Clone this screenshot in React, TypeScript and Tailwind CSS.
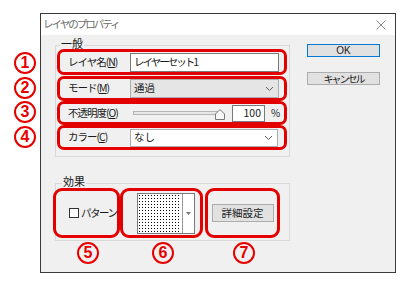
import React from 'react'

const jp = "font-['Noto_Sans_CJK_JP','Liberation_Sans',sans-serif]"

function Chevron() {
  return (
    <svg width="9" height="6" viewBox="0 0 9 6" className="shrink-0">
      <polyline points="1,1 4.5,4.5 8,1" fill="none" stroke="#606060" strokeWidth="1" />
    </svg>
  )
}

function Row({ h, mt = '', children }: { h: string; mt?: string; children: React.ReactNode }) {
  return (
    <div className={`flex items-center border-[3px] border-[#e30000] rounded-[7px] ${h} ${mt}`}>
      {children}
    </div>
  )
}

function Label({ text, k }: { text: string; k: string }) {
  return (
    <div className="w-[62px] pl-[8px] box-content text-[10.5px] leading-none tracking-[-1px] text-[#1a1a1a] whitespace-nowrap">
      {text}(<span className="underline">{k}</span>)
    </div>
  )
}

// red circled annotation numbers that sit on top of the dialog
const marks = [
  { n: '1', x: 'left-[14px]', y: 'top-[52px]' },
  { n: '2', x: 'left-[14px]', y: 'top-[77px]' },
  { n: '3', x: 'left-[14px]', y: 'top-[101px]' },
  { n: '4', x: 'left-[14px]', y: 'top-[126px]' },
  { n: '5', x: 'left-[77px]', y: 'top-[242px]' },
  { n: '6', x: 'left-[152px]', y: 'top-[242px]' },
  { n: '7', x: 'left-[233px]', y: 'top-[242px]' },
]

export default function App() {
  return (
    <div className={`relative w-[414px] h-[287px] bg-white overflow-hidden ${jp}`}>
      <div className="ml-[40px] mt-[13px] w-[356px] h-[260px] border border-[#3a3a3a] bg-[#f0f0f0] flex flex-col">
        {/* title bar */}
        <div className="h-[21px] bg-white flex items-center justify-between pl-[2px] pr-[9px]">
          <span className="text-[10.5px] leading-none tracking-[-2px] text-[#6b6b6b]">レイヤのプロパティ</span>
          <svg width="10" height="10" viewBox="0 0 10 10">
            <line x1="0.5" y1="0.5" x2="9.5" y2="9.5" stroke="#8a8a8a" strokeWidth="1" />
            <line x1="9.5" y1="0.5" x2="0.5" y2="9.5" stroke="#8a8a8a" strokeWidth="1" />
          </svg>
        </div>

        <div className="flex">
          <div className="pl-[14px]">
            {/* 一般 */}
            <div className="relative mt-[10px] w-[235px] border border-[#d9d9d9] pt-[3px] pb-[6px] pl-[1px] pr-[2px]">
              <span className="absolute -top-[8px] left-[4px] px-[1px] bg-[#f0f0f0] text-[11px] leading-none text-[#1a1a1a]">一般</span>
              <Row h="h-[26px]">
                <Label text="レイヤ名" k="N" />
                <div className="w-[149px] h-[19px] bg-white border border-[#7a7a7a] flex items-center pl-[3px] text-[10.5px] leading-none tracking-[-2px] text-[#1a1a1a]">
                  レイヤーセット1
                </div>
              </Row>
              <Row h="h-[25px]" mt="mt-[1px]">
                <Label text="モード" k="M" />
                <div className="w-[149px] h-[19px] bg-[#e5e5e5] border border-[#adadad] flex items-center justify-between pl-[3px] pr-[4px] text-[10.5px] leading-none text-[#1a1a1a]">
                  <span>通過</span>
                  <Chevron />
                </div>
              </Row>
              <Row h="h-[24px]">
                <Label text="不透明度" k="O" />
                <div className="w-[96px] h-[16px] relative flex items-center">
                  <div className="ml-[3px] w-[89px] h-[4px] bg-[#e7e7e7] border border-[#b5b5b5]" />
                  <svg width="10" height="11" viewBox="0 0 10 11" className="absolute left-[85px] top-[4px]">
                    <polygon points="0.5,10.5 0.5,5 5,0.5 9.5,5 9.5,10.5" fill="#f7f7f7" stroke="#7a7a7a" strokeWidth="1" />
                  </svg>
                </div>
                <div className="ml-[6px] w-[33px] h-[17px] bg-white border border-[#7a7a7a] flex items-center justify-end pr-[3px] text-[10.5px] leading-none text-[#1a1a1a]">
                  100
                </div>
                <span className="ml-[6px] text-[10px] leading-none text-[#1a1a1a]">%</span>
              </Row>
              <Row h="h-[25px]">
                <Label text="カラー" k="C" />
                <div className="w-[148px] h-[18px] bg-white border border-[#adadad] flex items-center justify-between pl-[3px] pr-[4px] text-[10.5px] leading-none text-[#1a1a1a]">
                  <span>なし</span>
                  <Chevron />
                </div>
              </Row>
            </div>

            {/* 効果 */}
            <div className="relative mt-[26px] w-[235px] h-[58px] border border-[#d9d9d9] pt-[4px]">
              <span className="absolute -top-[8px] left-[6px] px-[1px] bg-[#f0f0f0] text-[11px] leading-none text-[#1a1a1a]">効果</span>
              <div className="flex -ml-[3px] h-[50px]">
                <div className="w-[67px] h-full border-[3px] border-[#e30000] rounded-[9px] flex items-center pl-[13px] gap-[2px]">
                  <div className="w-[10px] h-[10px] bg-white border border-[#333] shrink-0" />
                  <span className="text-[10.5px] leading-none tracking-[-1.5px] text-[#1a1a1a] whitespace-nowrap">パターン</span>
                </div>
                <div className="w-[83px] h-full border-[3px] border-[#e30000] rounded-[9px] flex items-center pl-[14px]">
                  <div className="w-[58px] h-[41px] bg-white border border-[#7a7a7a] flex">
                    <svg width="44" height="39" className="shrink-0">
                      <defs>
                        <pattern id="dots" width="3" height="3" patternUnits="userSpaceOnUse">
                          <rect x="1" y="1" width="1" height="1" fill="#000" />
                        </pattern>
                      </defs>
                      <rect x="1" y="1" width="42" height="37" fill="url(#dots)" />
                    </svg>
                    <div className="flex-1 border-l border-[#9a9a9a] flex items-center justify-center">
                      <svg width="5" height="3" viewBox="0 0 5 3">
                        <polygon points="0,0 5,0 2.5,3" fill="#777" />
                      </svg>
                    </div>
                  </div>
                </div>
                <div className="ml-[2px] w-[75px] h-full border-[3px] border-[#e30000] rounded-[9px] flex items-center justify-center">
                  <div className="w-[62px] h-[18px] bg-[#e1e1e1] border border-[#adadad] flex items-center justify-center text-[10.5px] leading-none text-[#1a1a1a]">
                    詳細設定
                  </div>
                </div>
              </div>
            </div>
          </div>

          {/* buttons */}
          <div className="ml-[17px] flex flex-col">
            <div className="mt-[9px] w-[73px] h-[13px] bg-[#e1e1e1] border border-[#0078d7] flex items-center justify-center text-[10px] leading-none text-[#1a1a1a] font-['Liberation_Sans',sans-serif]">
              OK
            </div>
            <div className="mt-[15px] w-[73px] h-[13px] bg-[#e1e1e1] border border-[#adadad] flex items-center justify-center text-[10px] leading-none tracking-[-2px] text-[#1a1a1a]">
              キャンセル
            </div>
          </div>
        </div>
      </div>

      {marks.map((m) => (
        <div
          key={m.n}
          className={`absolute ${m.x} ${m.y} w-[22px] h-[22px] rounded-full border-[2.5px] border-[#e60000] flex items-center justify-center text-[16px] leading-none font-bold text-[#e60000] font-['Liberation_Sans',sans-serif]`}
        >
          {m.n}
        </div>
      ))}
    </div>
  )
}
